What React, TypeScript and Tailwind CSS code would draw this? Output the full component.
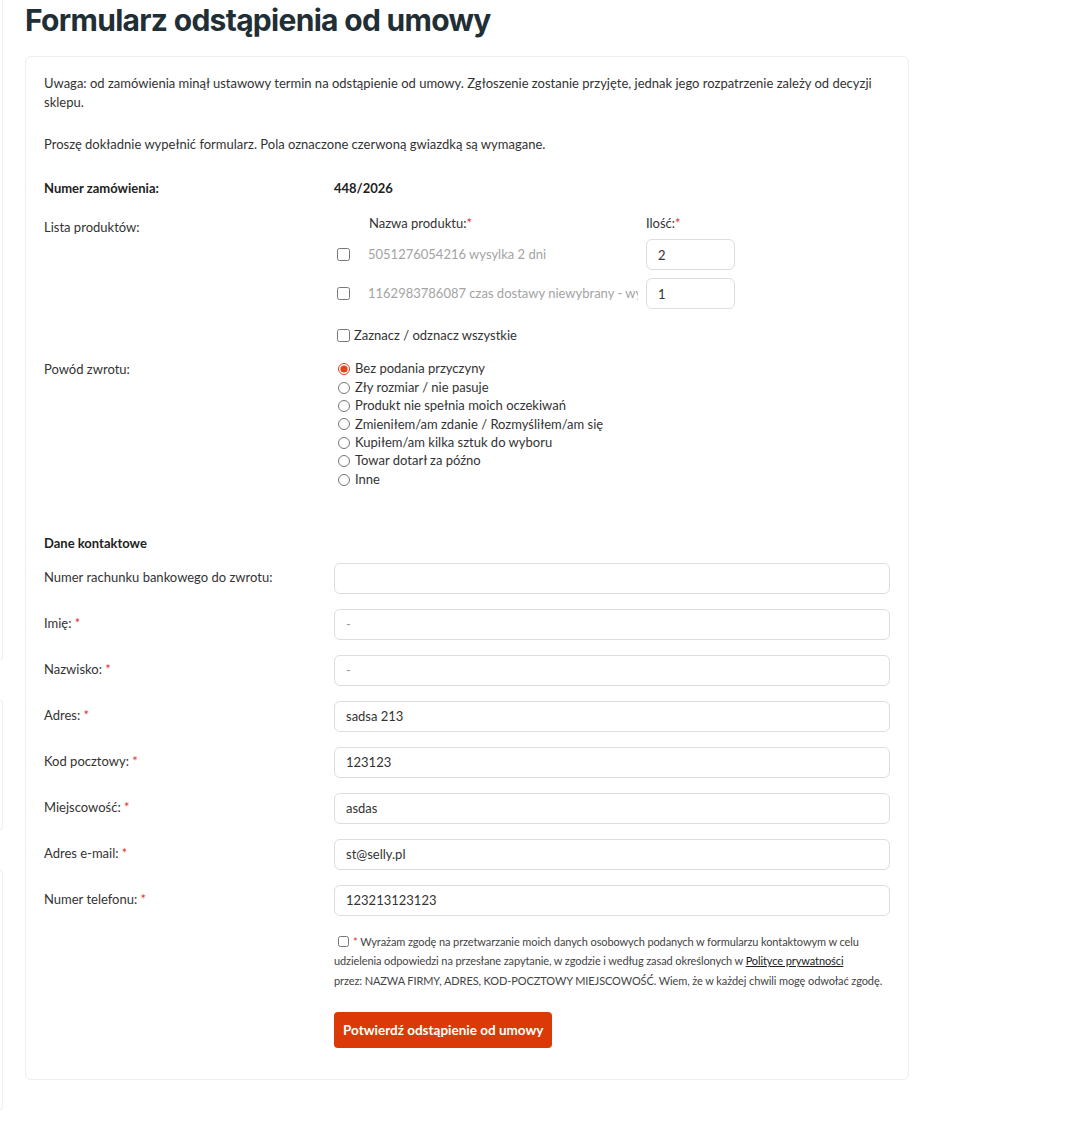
import { useState } from "react";

const reasons = [
  "Bez podania przyczyny",
  "Zły rozmiar / nie pasuje",
  "Produkt nie spełnia moich oczekiwań",
  "Zmieniłem/am zdanie / Rozmyśliłem/am się",
  "Kupiłem/am kilka sztuk do wyboru",
  "Towar dotarł za późno",
  "Inne",
];

const products = [
  { name: "5051276054216 wysylka 2 dni", qty: "2" },
  { name: "1162983786087 czas dostawy niewybrany - wysylka 2 dni", qty: "1" },
];

const contactFields = [
  { label: "Numer rachunku bankowego do zwrotu:", value: "", required: false, muted: false },
  { label: "Imię:", value: "-", required: true, muted: true },
  { label: "Nazwisko:", value: "-", required: true, muted: true },
  { label: "Adres:", value: "sadsa 213", required: true, muted: false },
  { label: "Kod pocztowy:", value: "123123", required: true, muted: false },
  { label: "Miejscowość:", value: "asdas", required: true, muted: false },
  { label: "Adres e-mail:", value: "st@selly.pl", required: true, muted: false },
  { label: "Numer telefonu:", value: "123213123123", required: true, muted: false },
];

function Req() {
  return <span className="text-[#e0332b]">*</span>;
}

export default function App() {
  const [reason, setReason] = useState(0);

  return (
    <div className="flex min-h-[1127px] bg-white font-['Lato',sans-serif] text-[13px] text-[#333]">
      {/* edge of the surrounding layout */}
      <div className="flex w-[3px] flex-col gap-[40px]">
        <div className="h-[660px] rounded-br-[4px] border-r border-b border-[#eee]" />
        <div className="h-[130px] rounded-r-[4px] border-y border-r border-[#eee]" />
        <div className="h-[240px] rounded-r-[4px] border-y border-r border-[#eee]" />
      </div>

      <div className="ml-[22px] w-[884px]">
        <h1 className="pt-[1px] font-['Inter',sans-serif] text-[30px] font-bold leading-[38px] tracking-[-0.7px] text-[#1f2f35]">
          Formularz odstąpienia od umowy
        </h1>

        <div className="mt-[17px] rounded-[6px] border border-[#eee] px-[18px] pt-[17px] pb-[31px]">
          <p className="leading-[19px]">
            Uwaga: od zamówienia minął ustawowy termin na odstąpienie od umowy. Zgłoszenie zostanie przyjęte, jednak jego rozpatrzenie zależy od decyzji sklepu.
          </p>
          <p className="mt-[23px] leading-[19px]">
            Proszę dokładnie wypełnić formularz. Pola oznaczone czerwoną gwiazdką są wymagane.
          </p>

          <div className="mt-[25px] flex font-bold leading-[19px] text-[#222]">
            <div className="w-[290px]">Numer zamówienia:</div>
            <div>448/2026</div>
          </div>

          <div className="mt-[16px] flex">
            <div className="w-[290px] pt-[4px] leading-[19px]">Lista produktów:</div>
            <div>
              <div className="flex leading-[19px]">
                <div className="w-[35px]" />
                <div className="w-[277px]">
                  Nazwa produktu:<Req />
                </div>
                <div>
                  Ilość:<Req />
                </div>
              </div>
              <div className="mt-[6px] flex flex-col gap-[8px]">
                {products.map((p) => (
                  <div key={p.name} className="flex items-center">
                    <div className="flex w-[34px] items-center pl-[3px]">
                      <input type="checkbox" className="h-[13px] w-[13px] accent-[#e0441b]" />
                    </div>
                    <div className="mr-[8px] w-[270px] overflow-hidden whitespace-nowrap text-[#a3a3a3]">{p.name}</div>
                    <input
                      type="text"
                      defaultValue={p.qty}
                      className="h-[31px] w-[89px] rounded-[6px] border border-[#ddd] px-[11px] text-[13px] text-[#333] outline-none"
                    />
                  </div>
                ))}
              </div>
              <label className="mt-[17px] flex items-center gap-[4px] pl-[3px] leading-[19px]">
                <input type="checkbox" className="h-[13px] w-[13px] accent-[#e0441b]" />
                <span>Zaznacz / odznacz wszystkie</span>
              </label>
            </div>
          </div>

          <div className="mt-[15px] flex">
            <div className="w-[290px]">Powód zwrotu:</div>
            <div className="flex flex-col">
              {reasons.map((r, i) => (
                <label key={r} className="flex h-[18.4px] items-center gap-[5px] pl-[4px]">
                  <input
                    type="radio"
                    name="reason"
                    checked={reason === i}
                    onChange={() => setReason(i)}
                    className="m-0 h-[12px] w-[12px] accent-[#e0441b]"
                  />
                  <span>{r}</span>
                </label>
              ))}
            </div>
          </div>

          <h3 className="mt-[45px] font-bold leading-[19px] text-[#222]">Dane kontaktowe</h3>

          <div className="mt-[10px] flex flex-col gap-[15px]">
            {contactFields.map((f) => (
              <div key={f.label} className="flex items-center">
                <div className="w-[290px]">
                  {f.label}
                  {f.required && (
                    <>
                      {" "}
                      <Req />
                    </>
                  )}
                </div>
                <input
                  type="text"
                  defaultValue={f.value}
                  className={`h-[31px] flex-1 rounded-[6px] border border-[#ddd] px-[11px] text-[13px] outline-none ${
                    f.muted ? "text-[#999]" : "text-[#333]"
                  }`}
                />
              </div>
            ))}
          </div>

          <div className="ml-[290px] mt-[16px] text-[11px] leading-[19.5px] tracking-[-0.1px] text-[#444]">
            <label>
              <input type="checkbox" className="mr-[4px] ml-[4px] h-[11px] w-[11px] align-[-1px] accent-[#e0441b]" />
              <Req /> Wyrażam zgodę na przetwarzanie moich danych osobowych podanych w formularzu kontaktowym w celu udzielenia odpowiedzi na przesłane zapytanie, w zgodzie i według zasad określonych w{" "}
              <a href="#" className="text-[#222] underline">
                Polityce prywatności
              </a>
              <br />
              przez: NAZWA FIRMY, ADRES, KOD-POCZTOWY MIEJSCOWOŚĆ. Wiem, że w każdej chwili mogę odwołać zgodę.
            </label>
          </div>

          <button className="ml-[290px] mt-[22px] h-[36px] rounded-[4px] bg-[#db3a08] px-[9px] text-[13.5px] font-bold text-white">
            Potwierdź odstąpienie od umowy
          </button>
        </div>
      </div>
    </div>
  );
}
